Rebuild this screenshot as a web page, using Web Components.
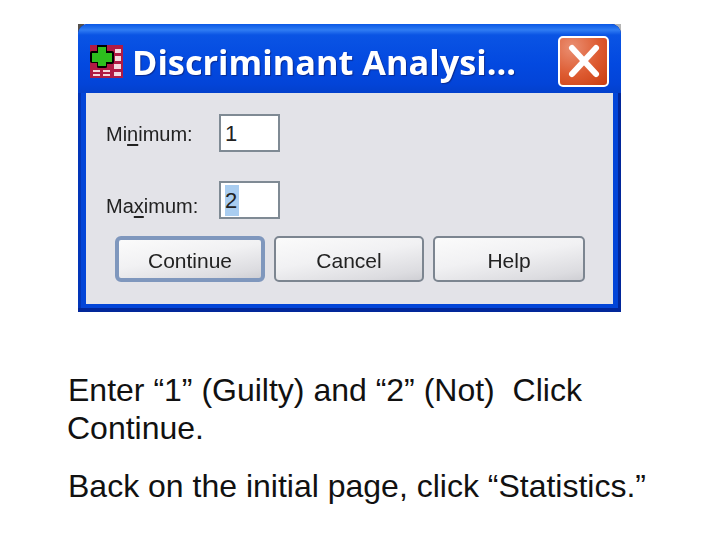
<!DOCTYPE html>
<html>
<head>
<meta charset="utf-8">
<style>
  html, body { margin: 0; background: #fff; }
  body { width: 720px; height: 540px; overflow: hidden; font-family: "Liberation Sans", Arial, sans-serif; }
</style>
</head>
<body>
<slide-page>
  <xp-dialog title-text="Discriminant Analysi...">
    <range-field label="Minimum:" key="n" value="1"></range-field>
    <range-field label="Maximum:" key="x" value="2" selected></range-field>
    <div slot="buttons" style="display:contents">
      <xp-button default>Continue</xp-button>
      <xp-button>Cancel</xp-button>
      <xp-button wide>Help</xp-button>
    </div>
  </xp-dialog>
  <p slot="text" style="margin:0 0 20px;line-height:38px">Enter “1” (Guilty) and “2” (Not)&nbsp; Click<br><span style="margin-left:-1px">Continue.</span></p>
  <p slot="text" style="margin:0;line-height:38px">Back on the initial page, click “Statistics.”</p>
</slide-page>

<script>
class SlidePage extends HTMLElement {
  constructor() {
    super();
    this.attachShadow({mode: 'open'}).innerHTML = `
      <style>
        :host { display: block; padding: 24px 0 0 78px; box-sizing: border-box; height: 540px; }
        .text { margin: 59px 0 0 -10px; width: 640px; font-size: 32px; color: #111; }
      </style>
      <slot></slot>
      <div class="text"><slot name="text"></slot></div>`;
  }
}

class XpDialog extends HTMLElement {
  constructor() {
    super();
    this.attachShadow({mode: 'open'}).innerHTML = `
      <style>
        :host { display: flex; flex-direction: column; width: 543px; height: 288px; box-sizing: border-box; position: relative;
          background: linear-gradient(90deg, #55504c 0 6px, transparent 6px calc(100% - 8px), #b5b5b5 calc(100% - 8px)) top / 100% 8px no-repeat;
          padding: 0 8px 8px 8px; }
        .frame { position: absolute; inset: 0; background: #0345d8; border-radius: 10px 10px 0 0;
          box-shadow: inset -3px 0 0 #02279a, inset 0 -4px 0 #02279a, inset 3px 0 0 #0235b8; }
        .bar { height: 69px; flex: none; display: flex; align-items: center; margin: 0 -8px; padding: 5px 12px 0 12px; box-sizing: border-box;
          border-radius: 10px 10px 0 0; position: relative;
          background: linear-gradient(#0a58e6 0, #2f7cf3 6px, #0a54e4 11px, #0349e0 40px, #0344d8 60px, #0340cc 69px); }
        svg { flex: none; }
        .title { flex: 1; margin-left: 9px; font: bold 34.3px "Open Sans", "DejaVu Sans", sans-serif; color: #fff; white-space: nowrap;
          text-shadow: 1px 1px 1px #0a2a90; filter: blur(.35px); }
        .close { width: 51px; height: 51px; flex: none; box-sizing: border-box; border: 2px solid #fff; border-radius: 5px;
          background: radial-gradient(circle at 25% 20%, #ea8f72, #dd5a30 55%, #c93c10); display: flex; align-items: center; justify-content: center; }
        .body { flex: 1; background: #e3e3e8; display: flex; flex-direction: column; padding: 21px 0 0 20px; position: relative; }
        .fields { display: flex; flex-direction: column; gap: 29px; }
        .buttons { display: flex; gap: 9px; margin: 17px 0 0 9px; }
      </style>
      <div class="frame"></div>
      <div class="bar">
        <svg width="33" height="33" viewBox="0 0 33 33">
          <rect width="33" height="33" fill="#b01b44"/>
          <g fill="#f3d9de">
            <rect x="25" y="4" width="6" height="4"/><rect x="25" y="11" width="6" height="5"/>
            <rect x="3" y="25" width="7" height="2"/><rect x="13" y="25" width="7" height="2"/>
            <rect x="24" y="19" width="7" height="5"/><rect x="24" y="27" width="7" height="4"/>
            <rect x="3" y="29" width="7" height="2"/><rect x="13" y="29" width="7" height="2"/>
          </g>
          <path d="M7 0h10v6h5q2 0 2 2v9q0 2-2 2h-5v3q0 1-2 1H9q-2 0-2-1v-4H2q-2 0-2-2V8q0-2 2-2h5z" fill="#000"/>
          <path d="M8 2h8v6h6v9h-6v4H8v-4H2V8h6z" fill="#2dbf1d"/>
        </svg>
        <div class="title"></div>
        <div class="close">
          <svg width="36" height="36" viewBox="0 0 36 36"><path d="M6 5L30 31M30 5L6 31" stroke="#fff" stroke-width="6" stroke-linecap="round"/></svg>
        </div>
      </div>
      <div class="body">
        <div class="fields"><slot></slot></div>
        <div class="buttons"><slot name="buttons"></slot></div>
      </div>`;
    this.shadowRoot.querySelector('.title').textContent = this.getAttribute('title-text');
  }
}

class RangeField extends HTMLElement {
  constructor() {
    super();
    this.attachShadow({mode: 'open'}).innerHTML = `
      <style>
        :host { display: flex; align-items: flex-start; font: 20px "Liberation Sans", sans-serif; color: #222; }
        .label { width: 113px; line-height: 38px; position: relative; filter: blur(.35px); }
        u { text-underline-offset: 3px; }
        .box { width: 61px; height: 38px; box-sizing: border-box; border: 2px solid #7f8a94; background: #fff; padding: 2px 0 0 4px; line-height: 31px; font-size: 22px; }
        .sel { display: inline-block; background: #a9cdf0; padding-right: 2px; }
      </style>
      <div class="label"></div>
      <div class="box"><span class="val"></span></div>`;
    var label = this.getAttribute('label');
    var key = this.getAttribute('key');
    var i = label.indexOf(key);
    var el = this.shadowRoot.querySelector('.label');
    el.append(label.slice(0, i));
    var u = document.createElement('u');
    u.textContent = key;
    el.append(u, label.slice(i + 1));
    el.style.top = this.hasAttribute('selected') ? '6px' : '1px';
    var val = this.shadowRoot.querySelector('.val');
    val.textContent = this.getAttribute('value');
    if (this.hasAttribute('selected')) val.className = 'sel';
  }
}

class XpButton extends HTMLElement {
  constructor() {
    super();
    this.attachShadow({mode: 'open'}).innerHTML = `
      <style>
        :host { display: flex; width: 150px; height: 46px; box-sizing: border-box; align-items: center; justify-content: center;
          border: 2px solid #7c8590; border-radius: 5px; font: 21px "Liberation Sans", sans-serif; color: #222;
          padding-top: 4px;
          background: linear-gradient(170deg, #fbfbfb 0, #f1f1f3 45%, #dcdce0 85%, #cfcfd4 100%); }
        :host([default]) { border: 4px solid #7f97bd; border-radius: 6px; }
        :host([wide]) { width: 152px; }
        slot { display: block; filter: blur(.35px); }
      </style>
      <slot></slot>`;
  }
}

customElements.define('slide-page', SlidePage);
customElements.define('xp-dialog', XpDialog);
customElements.define('range-field', RangeField);
customElements.define('xp-button', XpButton);
</script>
</body>
</html>
